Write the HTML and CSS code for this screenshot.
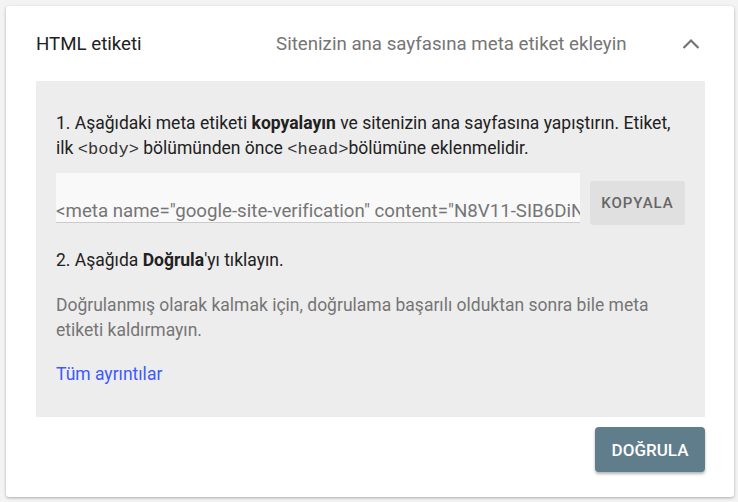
FILE: index.html
```html
<!DOCTYPE html>
<html lang="tr">
<head>
<meta charset="utf-8">
<title>HTML etiketi</title>
<link rel="stylesheet" href="styles.css">
</head>
<body>
<div class="card">
  <div class="header">
    <div class="title">HTML etiketi</div>
    <div class="subtitle">Sitenizin ana sayfasına meta etiket ekleyin</div>
    <svg class="chevron" width="24" height="24" viewBox="0 0 24 24"><polyline points="4.5,16 12,8.5 19.5,16" fill="none" stroke="#757575" stroke-width="2.2"/></svg>
  </div>
  <div class="panel">
    <p class="step">1. Aşağıdaki meta etiketi <b>kopyalayın</b> ve sitenizin ana sayfasına yapıştırın. Etiket, ilk <code>&lt;body&gt;</code> bölümünden önce <code>&lt;head&gt;</code>bölümüne eklenmelidir.</p>
    <div class="copyrow">
      <div class="field"><span>&lt;meta name="google-site-verification" content="N8V11-SIB6DiN</span></div>
      <button class="copy">KOPYALA</button>
    </div>
    <p class="step step2">2. Aşağıda <b>Doğrula</b>'yı tıklayın.</p>
    <p class="note">Doğrulanmış olarak kalmak için, doğrulama başarılı olduktan sonra bile meta etiketi kaldırmayın.</p>
    <a class="link" href="#">Tüm ayrıntılar</a>
  </div>
  <div class="footer">
    <button class="verify">DOĞRULA</button>
  </div>
</div>
</body>
</html>
```
FILE: styles.css
```css
* { box-sizing: border-box; }
html, body { margin: 0; padding: 0; }
body {
  background: #f3f3f3;
  font-family: Roboto, "Noto Sans", sans-serif;
  padding: 6px 4px 5px 6px;
}
.card {
  background: #fff;
  border-radius: 3px;
  box-shadow: 0 1px 3px rgba(0,0,0,0.3);
  padding: 0 29px 25px 30px;
}
.header {
  height: 75px;
  display: flex;
  align-items: center;
  padding-top: 1px;
}
.title {
  font-size: 18.7px;
  color: #212121;
  line-height: 24px;
}
.subtitle {
  margin-left: auto;
  font-size: 18.7px;
  color: #757575;
  line-height: 24px;
}
.chevron {
  margin-left: 52px;
  margin-right: 2.5px;
}
.panel {
  background: #ededed;
  padding: 30px 20px 30px 20px;
}
.step {
  margin: 0;
  font-size: 17.5px;
  line-height: 25px;
  color: #212121;
}
.step b { font-weight: 700; }
code {
  font-family: "Liberation Mono", "DejaVu Sans Mono", monospace;
  font-size: 17px;
  color: #333;
}
.copyrow {
  display: flex;
  align-items: flex-end;
  margin-top: 11px;
}
.field {
  width: 524px;
  background: #f9f9f9;
  border-bottom: 1px solid #cbcbcb;
  padding-top: 28px;
  padding-bottom: 1px;
  font-size: 18.7px;
  line-height: 20px;
  color: #757575;
  white-space: nowrap;
  overflow: hidden;
  margin-bottom: 2px;
}
.copy {
  margin-left: 10px;
  width: 95px;
  height: 44px;
  border: none;
  border-radius: 3px;
  background: #e0e0e0;
  color: #666;
  font-family: Roboto, sans-serif;
  font-weight: 500;
  font-size: 15px;
  letter-spacing: 1px;
  padding: 0;
}
.step2 { margin-top: 22.5px; }
.note {
  margin: 20.5px 0 0 0;
  font-size: 17.5px;
  line-height: 25px;
  color: #757575;
}
.link {
  display: block;
  margin-top: 19px;
  font-size: 17.5px;
  line-height: 25px;
  color: #3d5afe;
  text-decoration: none;
}
.footer {
  display: flex;
  justify-content: flex-end;
  padding-top: 10px;
}
.verify {
  width: 110px;
  height: 45px;
  border: none;
  border-radius: 4px;
  background: #607d8b;
  color: #fff;
  font-family: Roboto, sans-serif;
  font-weight: 500;
  font-size: 17px;
  padding: 0;
  box-shadow: 0 2px 3px rgba(0,0,0,0.3);
}
```
